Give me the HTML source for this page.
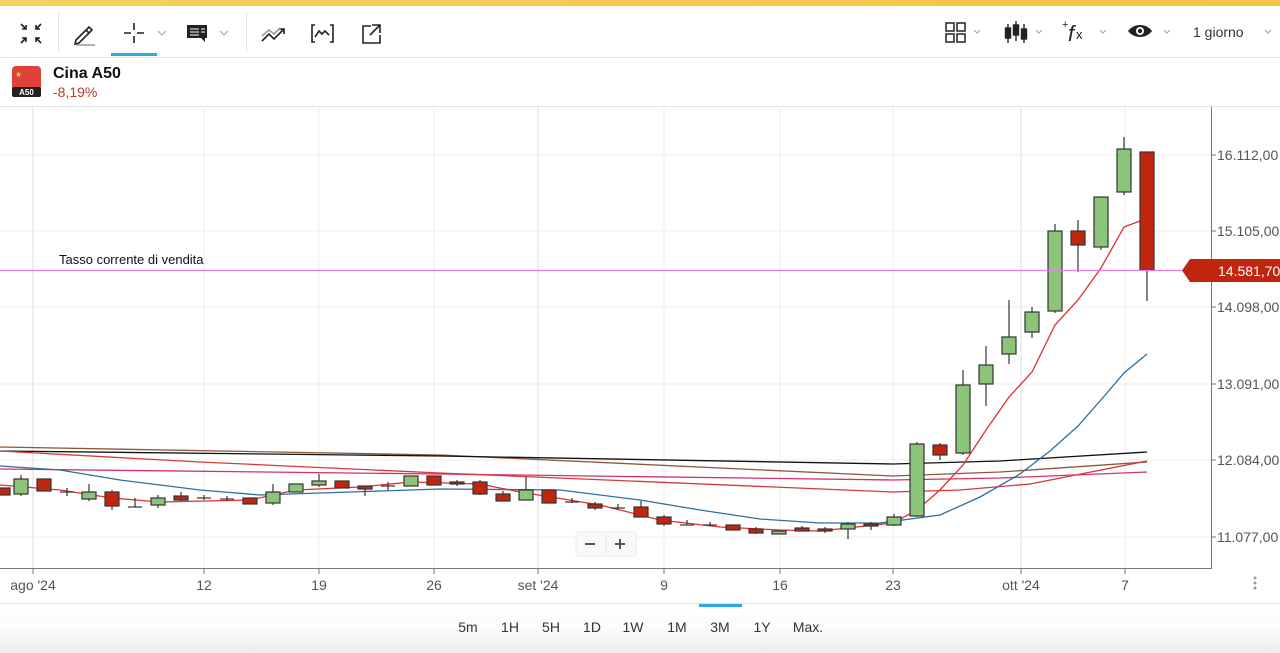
<!DOCTYPE html>
<html><head><meta charset="utf-8"><style>
html,body{margin:0;padding:0;width:1280px;height:653px;overflow:hidden;background:#fff;font-family:"Liberation Sans",Arial,sans-serif}
svg text{font-family:"Liberation Sans",Arial,sans-serif}
</style></head><body>
<svg width="1280" height="653" viewBox="0 0 1280 653" xmlns="http://www.w3.org/2000/svg">
<defs>
<linearGradient id="yb" x1="0" x2="1"><stop offset="0" stop-color="#f6cf60"/><stop offset="1" stop-color="#f5c243"/></linearGradient>
<linearGradient id="bp" x1="0" y1="0" x2="0" y2="1"><stop offset="0" stop-color="#fff"/><stop offset="0.5" stop-color="#fbfbfb"/><stop offset="1" stop-color="#ececec"/></linearGradient>
</defs>
<rect x="0" y="0" width="1280" height="6" fill="url(#yb)"/>
<!-- toolbar -->
<line x1="0" y1="57.5" x2="1280" y2="57.5" stroke="#e2e2e2"/>
<line x1="58.5" y1="12" x2="58.5" y2="52" stroke="#e6e6e6"/>
<line x1="246.5" y1="12" x2="246.5" y2="52" stroke="#e6e6e6"/>
<g stroke="#222" stroke-width="1.6" fill="none">
<!-- compress -->
<path d="M21 24l5 5M26 25v4h-4M41 24l-5 5M36 25v4h4M21 43l5-5M22 38h4v4M41 43l-5-5M40 38h-4v4"/>
<!-- pencil -->
<path d="M76 40l13-13 3 3-13 13-4 1zM86 30l3 3"/>
<line x1="76" y1="45" x2="95" y2="45" stroke="#999"/>
<!-- crosshair -->
<path d="M124 33h7M137 33h7M134 23v7M134 36v7"/>
<path d="M158 31l4 4 4-4" stroke="#aaa" stroke-width="1.2"/>
<path d="M220 31l4 4 4-4" stroke="#aaa" stroke-width="1.2"/>
<!-- trend -->
<path d="M262 41l7-7 5 5 10-10M279 29h5v5"/>
<path d="M262 36l7-6 5 4 6-6" stroke="#999"/>
<!-- bracket chart -->
<path d="M315 25h-3v17h3M330 25h3v17h-3M315 37l4-6 3 3 3-3 4 4"/>
<!-- external -->
<path d="M371 26h-8v17h17v-8M372 25h8v8M380 25l-10 10"/>
</g>
<rect x="111" y="53" width="46" height="3" fill="#2fa8e0"/>
<!-- comment icon -->
<path d="M187 25h20v13h-2v4l-4-4h-14z" fill="#222"/>
<path d="M190 29h9M190 32h9M190 35h9M201 29h4M201 32h4" stroke="#fff" stroke-width="1"/>
<!-- right toolbar -->
<g stroke="#222" stroke-width="1.5" fill="none">
<rect x="946" y="23" width="8" height="8"/><rect x="957" y="23" width="8" height="8"/>
<rect x="946" y="34" width="8" height="8"/><rect x="957" y="34" width="8" height="8"/>
</g>
<g fill="#222" stroke="#222" stroke-width="1.4">
<line x1="1008" y1="24" x2="1008" y2="43"/><rect x="1005.5" y="28" width="5" height="10"/>
<line x1="1016" y1="21" x2="1016" y2="41"/><rect x="1013.5" y="25" width="5" height="10"/>
<line x1="1024" y1="24" x2="1024" y2="43"/><rect x="1021.5" y="29" width="5" height="10"/>
</g>
<g stroke="#aaa" stroke-width="1.2" fill="none">
<path d="M974 30l3 3 3-3M1036 30l3 3 3-3M1100 30l3 3 3-3M1164 30l3 3 3-3M1265 30l3 3 3-3"/>
</g>
<text x="1062" y="28" font-size="11" fill="#222">+</text>
<text x="1068" y="41" font-size="22" font-style="italic" fill="#222" font-family="Liberation Serif,serif">f</text>
<text x="1076" y="39" font-size="13" fill="#222">x</text>
<path d="M1128 31c6-8 18-8 24 0-6 8-18 8-24 0z" fill="#222"/>
<circle cx="1140" cy="31" r="4" fill="#fff"/><circle cx="1140" cy="31" r="2.2" fill="#222"/>
<text x="1193" y="37" font-size="14" fill="#333">1 giorno</text>
<!-- instrument -->
<rect x="12" y="66" width="29" height="31" rx="4" fill="#e0423a"/>
<rect x="12" y="87" width="29" height="10" rx="2" fill="#222"/>
<text x="26.5" y="95" font-size="8" fill="#fff" text-anchor="middle" font-weight="bold">A50</text>
<text x="15" y="77" font-size="8" fill="#f5d142">★</text>
<text x="53" y="78" font-size="16" font-weight="bold" fill="#111">Cina A50</text>
<text x="53" y="97" font-size="14" fill="#c0392b">-8,19%</text>
<line x1="0" y1="106.5" x2="1280" y2="106.5" stroke="#e2e2e2"/>
<!-- grid -->
<g stroke="#eeeeee" stroke-width="1">
<line x1="0" y1="155" x2="1211" y2="155"/><line x1="0" y1="231" x2="1211" y2="231"/><line x1="0" y1="307" x2="1211" y2="307"/>
<line x1="0" y1="384" x2="1211" y2="384"/><line x1="0" y1="460" x2="1211" y2="460"/><line x1="0" y1="537" x2="1211" y2="537"/>
<line x1="204" y1="107" x2="204" y2="568"/><line x1="319" y1="107" x2="319" y2="568"/><line x1="434" y1="107" x2="434" y2="568"/>
<line x1="664" y1="107" x2="664" y2="568"/><line x1="780" y1="107" x2="780" y2="568"/><line x1="893" y1="107" x2="893" y2="568"/><line x1="1125" y1="107" x2="1125" y2="568"/>
</g>
<g stroke="#dcdcdc"><line x1="33" y1="107" x2="33" y2="568"/><line x1="538" y1="107" x2="538" y2="568"/><line x1="1021" y1="107" x2="1021" y2="568"/></g>
<!-- axes -->
<path d="M0 568.5H1211.5V107" stroke="#777" fill="none"/>
<g stroke="#777"><line x1="33" y1="568" x2="33" y2="574"/><line x1="204" y1="568" x2="204" y2="574"/><line x1="319" y1="568" x2="319" y2="574"/><line x1="434" y1="568" x2="434" y2="574"/><line x1="538" y1="568" x2="538" y2="574"/><line x1="664" y1="568" x2="664" y2="574"/><line x1="780" y1="568" x2="780" y2="574"/><line x1="893" y1="568" x2="893" y2="574"/><line x1="1021" y1="568" x2="1021" y2="574"/><line x1="1125" y1="568" x2="1125" y2="574"/>
<line x1="1211" y1="155" x2="1216" y2="155"/><line x1="1211" y1="231" x2="1216" y2="231"/><line x1="1211" y1="307" x2="1216" y2="307"/><line x1="1211" y1="384" x2="1216" y2="384"/><line x1="1211" y1="460" x2="1216" y2="460"/><line x1="1211" y1="537" x2="1216" y2="537"/></g>
<g font-size="14" fill="#555">
<text x="1217" y="160">16.112,00</text><text x="1217" y="236">15.105,00</text><text x="1217" y="312">14.098,00</text>
<text x="1217" y="389">13.091,00</text><text x="1217" y="465">12.084,00</text><text x="1217" y="542">11.077,00</text>
</g>
<g font-size="14" fill="#555" text-anchor="middle">
<text x="33" y="590">ago '24</text><text x="204" y="590">12</text><text x="319" y="590">19</text><text x="434" y="590">26</text>
<text x="538" y="590">set '24</text><text x="664" y="590">9</text><text x="780" y="590">16</text><text x="893" y="590">23</text>
<text x="1021" y="590">ott '24</text><text x="1125" y="590">7</text>
</g>
<g fill="#999"><circle cx="1255" cy="578" r="1.5"/><circle cx="1255" cy="583" r="1.5"/><circle cx="1255" cy="588" r="1.5"/></g>
<!-- MA lines -->
<g fill="none" stroke-width="1.3">
<polyline stroke="#8a5a3c" points="0,447 440,455 893,476 1000,472 1147,462"/>
<polyline stroke="#111" points="0,451 440,456 893,464 1000,461 1147,452"/>
<polyline stroke="#d6306b" points="0,469 440,474 893,480 1000,478 1147,472"/>
<polyline stroke="#d43a3a" points="0,451 200,462 440,473 893,492 960,490 1030,484 1147,461"/>
<polyline stroke="#2c6fa3" points="0,466 60,470 120,480 200,490 260,495 350,492 440,489 560,490 640,500 700,510 760,519 820,523 880,523 940,515 980,497 1020,474 1050,451 1078,426 1100,401 1124,373 1147,354"/>
<polyline stroke="#e03030" points="0,485 60,490 112,498 160,502 250,500 296,490 360,487 411,482 480,484 520,492 600,505 660,520 720,527 780,530 820,531 893,523 917,510 940,490 963,465 986,430 1009,397 1032,372 1055,325 1078,300 1101,268 1124,227 1140,221"/>
</g>
<!-- candles -->
<g stroke="#333" stroke-width="1.2">
<line x1="21" y1="475" x2="21" y2="496"/><line x1="67" y1="488" x2="67" y2="496"/><line x1="89" y1="484" x2="89" y2="501"/><line x1="112" y1="490" x2="112" y2="510"/><line x1="135" y1="498" x2="135" y2="507"/><line x1="158" y1="495" x2="158" y2="508"/><line x1="181" y1="492" x2="181" y2="501"/><line x1="204" y1="495" x2="204" y2="500"/><line x1="227" y1="496" x2="227" y2="501"/><line x1="273" y1="484" x2="273" y2="505"/><line x1="319" y1="474" x2="319" y2="487"/><line x1="365" y1="486" x2="365" y2="496"/><line x1="388" y1="482" x2="388" y2="490"/><line x1="457" y1="480" x2="457" y2="486"/><line x1="480" y1="480" x2="480" y2="495"/><line x1="503" y1="491" x2="503" y2="501"/><line x1="526" y1="477" x2="526" y2="500"/><line x1="572" y1="498" x2="572" y2="503"/><line x1="595" y1="502" x2="595" y2="510"/><line x1="618" y1="504" x2="618" y2="510"/><line x1="641" y1="501" x2="641" y2="517"/><line x1="664" y1="515" x2="664" y2="526"/><line x1="687" y1="520" x2="687" y2="525"/><line x1="710" y1="522" x2="710" y2="526"/><line x1="756" y1="527" x2="756" y2="534"/><line x1="802" y1="526" x2="802" y2="531"/><line x1="825" y1="527" x2="825" y2="533"/><line x1="848" y1="522" x2="848" y2="539"/><line x1="871" y1="522" x2="871" y2="530"/><line x1="894" y1="514" x2="894" y2="526"/><line x1="917" y1="442" x2="917" y2="517"/><line x1="940" y1="443" x2="940" y2="460"/><line x1="963" y1="370" x2="963" y2="455"/><line x1="986" y1="346" x2="986" y2="406"/><line x1="1009" y1="300" x2="1009" y2="364"/><line x1="1032" y1="307" x2="1032" y2="338"/><line x1="1055" y1="224" x2="1055" y2="313"/><line x1="1078" y1="220" x2="1078" y2="272"/><line x1="1101" y1="197" x2="1101" y2="250"/><line x1="1124" y1="137" x2="1124" y2="195"/><line x1="1147" y1="152" x2="1147" y2="301"/>
<!-- dojis -->
<line x1="60" y1="492" x2="74" y2="492"/><line x1="128" y1="507" x2="142" y2="507"/><line x1="197" y1="498" x2="211" y2="498"/><line x1="220" y1="499" x2="234" y2="499"/><line x1="381" y1="486" x2="395" y2="486"/><line x1="565" y1="502" x2="579" y2="502"/><line x1="611" y1="508" x2="625" y2="508"/><line x1="680" y1="525" x2="694" y2="525"/><line x1="703" y1="525" x2="717" y2="525"/>
</g>
<g stroke="#333" stroke-width="1.2" fill="#8cc47a">
<rect x="14" y="479" width="14" height="15"/><rect x="82" y="492" width="14" height="7"/><rect x="151" y="498" width="14" height="7"/><rect x="266" y="492" width="14" height="11"/><rect x="289" y="484" width="14" height="8"/><rect x="312" y="481" width="14" height="4"/><rect x="404" y="476" width="14" height="10"/><rect x="519" y="490" width="14" height="10"/><rect x="772" y="531" width="14" height="3"/><rect x="841" y="524" width="14" height="5"/><rect x="887" y="517" width="14" height="8"/><rect x="910" y="444" width="14" height="72"/><rect x="956" y="385" width="14" height="68"/><rect x="979" y="365" width="14" height="19"/><rect x="1002" y="337" width="14" height="17"/><rect x="1025" y="312" width="14" height="20"/><rect x="1048" y="231" width="14" height="80"/><rect x="1094" y="197" width="14" height="50"/><rect x="1117" y="149" width="14" height="43"/>
</g>
<g stroke="#333" stroke-width="1.2" fill="#c0260f">
<rect x="-4" y="488" width="14" height="7"/><rect x="37" y="479" width="14" height="12"/><rect x="105" y="492" width="14" height="14"/><rect x="174" y="496" width="14" height="4"/><rect x="243" y="498" width="14" height="6"/><rect x="335" y="481" width="14" height="7"/><rect x="358" y="486" width="14" height="3"/><rect x="427" y="476" width="14" height="9"/><rect x="450" y="482" width="14" height="2"/><rect x="473" y="482" width="14" height="12"/><rect x="496" y="494" width="14" height="7"/><rect x="542" y="490" width="14" height="13"/><rect x="588" y="504" width="14" height="4"/><rect x="634" y="507" width="14" height="10"/><rect x="657" y="517" width="14" height="7"/><rect x="726" y="525" width="14" height="5"/><rect x="749" y="529" width="14" height="4"/><rect x="795" y="528" width="14" height="3"/><rect x="818" y="529" width="14" height="2"/><rect x="864" y="524" width="14" height="2"/><rect x="933" y="445" width="14" height="10"/><rect x="1071" y="231" width="14" height="14"/><rect x="1140" y="152" width="14" height="118"/>
</g>
<!-- current rate -->
<line x1="0" y1="270.5" x2="1183" y2="270.5" stroke="#e57ee0" stroke-width="1.3"/>
<text x="59" y="264" font-size="13" fill="#111">Tasso corrente di vendita</text>
<path d="M1190 259H1280V282H1190L1182 270.5Z" fill="#c0260f"/>
<text x="1218" y="276" font-size="14" fill="#fff">14.581,70</text>
<!-- zoom buttons -->
<rect x="576" y="532" width="60" height="24" rx="2" fill="#f9f9f9" stroke="#ececec"/>
<line x1="606" y1="534" x2="606" y2="554" stroke="#e5e5e5"/>
<path d="M585 544h10M615 544h10M620 539v10" stroke="#555" stroke-width="2"/>
<!-- bottom panel -->
<rect x="0" y="604" width="1280" height="49" fill="url(#bp)"/>
<line x1="0" y1="603.5" x2="1280" y2="603.5" stroke="#e2e2e2"/>
<rect x="699" y="604" width="43" height="3" fill="#2fa8e0"/>
<g font-size="14" fill="#333" text-anchor="middle">
<text x="468" y="632">5m</text><text x="510" y="632">1H</text><text x="551" y="632">5H</text><text x="592" y="632">1D</text><text x="633" y="632">1W</text><text x="677" y="632">1M</text><text x="720" y="632">3M</text><text x="762" y="632">1Y</text><text x="808" y="632">Max.</text>
</g>
</svg>
</body></html>
